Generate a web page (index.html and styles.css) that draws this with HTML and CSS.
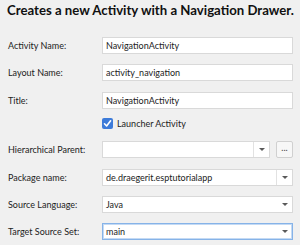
FILE: index.html
```html
<!DOCTYPE html>
<html>
<head>
<meta charset="utf-8">
<link rel="stylesheet" href="styles.css">
</head>
<body>
<div class="page">
  <h1 class="title">Creates a new Activity with a Navigation Drawer.</h1>
  <div class="form">
    <label class="lbl">Activity Name:</label>
    <div class="field text">NavigationActivity</div>

    <label class="lbl">Layout Name:</label>
    <div class="field text">activity_navigation</div>

    <label class="lbl">Title:</label>
    <div class="field text">NavigationActivity</div>

    <div class="lbl"></div>
    <div class="check-row">
      <span class="checkbox">
        <svg width="11" height="11" viewBox="0 0 11 11"><path d="M2.5 5.8 L4.6 8 L8.6 2.8" fill="none" stroke="#fff" stroke-width="1.6" stroke-linecap="round" stroke-linejoin="round"/></svg>
      </span>
      <span class="check-label">Launcher Activity</span>
    </div>

    <label class="lbl">Hierarchical Parent:</label>
    <div class="hp">
      <div class="field combo editable">
        <span class="val"></span>
        <span class="arrow-cell"><span class="arrow"></span></span>
      </div>
      <div class="btn-more">...</div>
    </div>

    <label class="lbl">Package name:</label>
    <div class="field combo editable">
      <span class="val">de.draegerit.esptutorialapp</span>
      <span class="arrow-cell"><span class="arrow"></span></span>
    </div>

    <label class="lbl">Source Language:</label>
    <div class="field combo">
      <span class="val">Java</span>
      <span class="arrow-cell plain"><span class="arrow"></span></span>
    </div>

    <label class="lbl">Target Source Set:</label>
    <div class="field combo focused">
      <span class="val">main</span>
      <span class="arrow-cell plain"><span class="arrow"></span></span>
    </div>
  </div>
</div>
</body>
</html>
```
FILE: styles.css
```css
html, body {
  margin: 0;
  padding: 0;
  background: #f0f0f0;
}
body {
  font-family: Lato, "Noto Sans", sans-serif;
  color: #1e1e1e;
}
.page {
  padding: 2px 0 0 8px;
  width: 285px;
}
.title {
  font-size: 13.2px;
  font-weight: 700;
  margin: 0 0 0 -1px;
  line-height: 17px;
  white-space: nowrap;
  color: #111;
}
.form {
  margin-top: 18px;
  display: grid;
  grid-template-columns: 94px 191px;
  grid-template-rows: 27px 28px 26px 23px 28px 27px 27px 17px;
  align-items: start;
}
.lbl {
  font-size: 9px;
  line-height: 17px;
  color: #222;
  white-space: nowrap;
}
.field {
  box-sizing: border-box;
  height: 17px;
  background: #fff;
  border: 1px solid #d9d9d9;
  font-size: 9px;
  line-height: 15px;
  color: #222;
  white-space: nowrap;
}
.text {
  padding-left: 3px;
}
.check-row {
  display: flex;
  align-items: center;
  gap: 4px;
  height: 11px;
  font-size: 9px;
  color: #222;
}
.checkbox {
  width: 11px;
  height: 11px;
  border-radius: 2px;
  background: #3d7bd9;
  display: flex;
}
.hp {
  display: flex;
  gap: 6px;
}
.hp .combo {
  flex: 1;
}
.combo {
  display: flex;
}
.combo .val {
  flex: 1;
  padding-left: 3px;
}
.arrow-cell {
  width: 15px;
  border-left: 1px solid #e2e2e2;
  display: flex;
  align-items: center;
  justify-content: center;
}
.arrow-cell.plain {
  border-left: none;
}
.arrow {
  width: 0;
  height: 0;
  border-left: 3px solid transparent;
  border-right: 3px solid transparent;
  border-top: 3px solid #5a5a5a;
}
.btn-more {
  box-sizing: border-box;
  width: 17px;
  height: 17px;
  border: 1px solid #d0d0d0;
  border-radius: 2px;
  background: #f7f7f7;
  font-size: 9px;
  line-height: 12px;
  text-align: center;
  color: #444;
}
.focused {
  border-color: #86b3e8;
  box-shadow: inset 0 0 0 1px #c4daf4;
}
```
